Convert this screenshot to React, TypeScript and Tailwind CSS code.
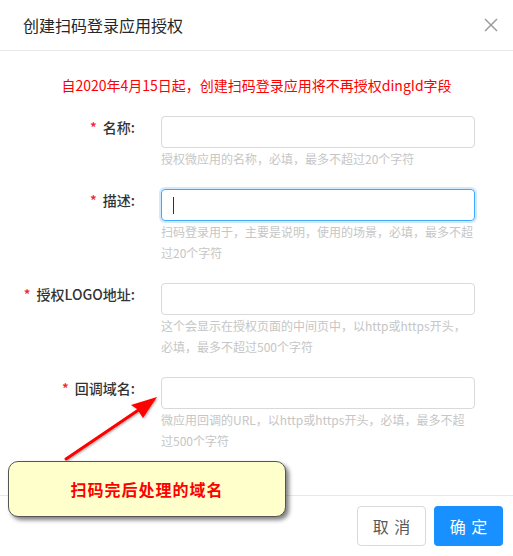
import React from "react";

const font = "font-['Microsoft_YaHei','Noto_Sans_CJK_SC',sans-serif]";

interface FieldProps {
  label: string;
  help: string[];
  focused?: boolean;
}

const Field: React.FC<FieldProps> = ({ label, help, focused }) => {
  return (
    <div className="flex">
      <div className="w-[135px] text-right text-[14px] leading-[22px] text-[#333] font-medium">
        <span className="text-[#f5222d] mr-[6px]">*</span>
        {label}:
      </div>
      <div className="ml-[26px] w-[314px]">
        <div
          className={`h-[32px] rounded-[4px] border flex items-center pl-[11px] ${
            focused
              ? "border-[#40a9ff] shadow-[0_0_0_2px_rgba(24,144,255,0.2)]"
              : "border-[#d9d9d9]"
          }`}
        >
          {focused && <span className="w-px h-[17px] bg-[#333]" />}
        </div>
        <div className="text-[12px] leading-[21px] text-[#c6c6c6]">
          {help.map((line, i) => (
            <div key={i} className="whitespace-nowrap">
              {line}
            </div>
          ))}
        </div>
      </div>
    </div>
  );
};

export default function App() {
  return (
    <div className={`relative w-[513px] h-[556px] bg-white overflow-hidden ${font}`}>
      {/* Header */}
      <div className="h-[51px] border-b border-[#e8e8e8] flex items-center justify-between pl-[23px] pr-[10px]">
        <span className="text-[16px] text-[#262626]">创建扫码登录应用授权</span>
        <svg width="24" height="24" viewBox="0 0 24 24" fill="none" stroke="#999" strokeWidth="1.4">
          <path d="M18 6 6 18" />
          <path d="m6 6 12 12" />
        </svg>
      </div>

      {/* Body */}
      <div className="h-[444px] pt-[23px]">
        <p className="text-center text-[14px] leading-[22px] text-[#ff0000]">
          自2020年4月15日起，创建扫码登录应用将不再授权dingId字段
        </p>
        <div className="mt-[20px] flex flex-col gap-[20px]">
          <Field label="名称" help={["授权微应用的名称，必填，最多不超过20个字符"]} />
          <Field
            label="描述"
            focused
            help={["扫码登录用于，主要是说明，使用的场景，必填，最多不超", "过20个字符"]}
          />
          <Field
            label="授权LOGO地址"
            help={["这个会显示在授权页面的中间页中，以http或https开头，", "必填，最多不超过500个字符"]}
          />
          <Field
            label="回调域名"
            help={["微应用回调的URL，以http或https开头，必填，最多不超", "过500个字符"]}
          />
        </div>
      </div>

      {/* Footer */}
      <div className="border-t border-[#e8e8e8] flex justify-end gap-[8px] pt-[10px] pr-[10px]">
        <button className="w-[69px] h-[40px] rounded-[4px] border border-[#d9d9d9] bg-white text-[16px] text-[#595959]">
          <span className="tracking-[0.34em] mr-[-0.34em]">取消</span>
        </button>
        <button className="w-[69px] h-[40px] rounded-[4px] bg-[#1890ff] text-[16px] text-white">
          <span className="tracking-[0.34em] mr-[-0.34em]">确定</span>
        </button>
      </div>

      {/* Annotation arrow */}
      <svg className="absolute inset-0 pointer-events-none" width="513" height="556">
        <defs>
          <filter id="sh" x="-20%" y="-20%" width="140%" height="140%">
            <feDropShadow dx="1" dy="1" stdDeviation="1" floodColor="#000" floodOpacity="0.35" />
          </filter>
        </defs>
        <g filter="url(#sh)">
          <line x1="66" y1="459" x2="140" y2="409" stroke="#ff0000" strokeWidth="3" strokeLinecap="round" />
          <polygon points="157,397 131,405 137,409 143,418" fill="#ff0000" />
        </g>
      </svg>

      {/* Annotation callout */}
      <div className="absolute left-[8px] top-[461px] w-[278px] h-[56px] rounded-[10px] border border-[#555] bg-[#ffffcc] shadow-[3px_3px_4px_rgba(0,0,0,0.5)] flex items-center justify-center">
        <span className="text-[16px] font-bold tracking-[1px] text-[#ff0000]">扫码完后处理的域名</span>
      </div>
    </div>
  );
}
